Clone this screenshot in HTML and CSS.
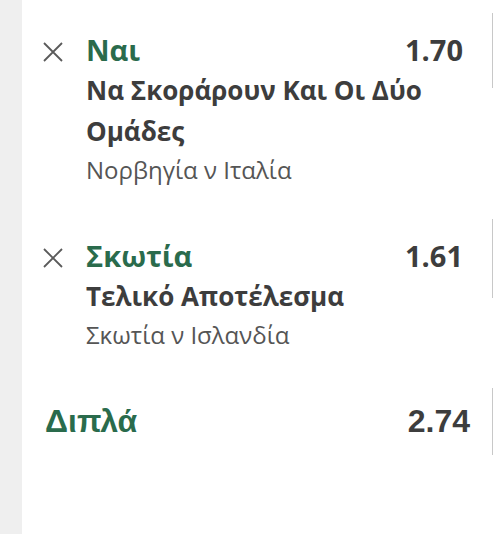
FILE: index.html
```html
<!DOCTYPE html>
<html lang="el">
<head>
<meta charset="utf-8">
<link rel="stylesheet" href="styles.css">
</head>
<body>
<div class="page">
  <div class="strip"></div>
  <div class="slip">
    <div class="bet bet-first">
      <div class="bet-body">
        <svg class="remove" viewBox="0 0 20 20" width="20" height="20"><path d="M1 1L19 19M19 1L1 19" stroke="#5a5a5a" stroke-width="1.8" fill="none"/></svg>
        <div class="bet-text">
          <div class="bet-head"><span class="pick">Ναι</span><span class="odds">1.70</span></div>
          <div class="market">Να Σκοράρουν Και Οι Δύο Ομάδες</div>
          <div class="event">Νορβηγία ν Ιταλία</div>
        </div>
      </div>
      <div class="edge"></div>
    </div>
    <div class="bet bet-second">
      <div class="bet-body">
        <svg class="remove" viewBox="0 0 20 20" width="20" height="20"><path d="M1 1L19 19M19 1L1 19" stroke="#5a5a5a" stroke-width="1.8" fill="none"/></svg>
        <div class="bet-text">
          <div class="bet-head"><span class="pick">Σκωτία</span><span class="odds">1.61</span></div>
          <div class="market">Τελικό Αποτέλεσμα</div>
          <div class="event">Σκωτία ν Ισλανδία</div>
        </div>
      </div>
      <div class="edge edge-second"></div>
    </div>
    <div class="bet total">
      <div class="total-row"><span class="total-label">Διπλά</span><span class="total-odds">2.74</span></div>
      <div class="edge edge-total"></div>
    </div>
  </div>
</div>
</body>
</html>
```
FILE: styles.css
```css
html, body {
  margin: 0;
  padding: 0;
  background: #ffffff;
}
.page {
  display: flex;
  width: 493px;
  height: 534px;
  overflow: hidden;
  font-family: "Open Sans", "Noto Sans", sans-serif;
}
.strip {
  width: 22px;
  flex: none;
  background: #efefef;
}
.slip {
  flex: 1;
  display: flex;
  flex-direction: column;
}
.bet {
  display: flex;
  align-items: flex-start;
}
.bet-first {
  padding-top: 13px;
}
.bet-second {
  padding-top: 31px;
}
.bet-body {
  flex: 1;
  display: flex;
  align-items: flex-start;
  padding-top: 17px;
}
.remove {
  flex: none;
  margin: 12px 23px 0 21px;
}
.bet-text {
  flex: 1;
  margin-right: 29px;
}
.bet-head {
  display: flex;
  justify-content: space-between;
  align-items: baseline;
  line-height: 40px;
}
.pick {
  font-size: 29px;
  font-weight: 700;
  color: #2a6b4c;
}
.odds {
  font-size: 29px;
  font-weight: 700;
  color: #3d3d3d;
}
.market {
  font-size: 26px;
  font-weight: 700;
  line-height: 41px;
  color: #3d3d3d;
}
.event {
  font-size: 24px;
  line-height: 36px;
  color: #555555;
}
.edge {
  width: 1px;
  height: 75px;
  background: #c8c8c8;
  flex: none;
}
.edge-second {
  height: 79px;
}
.total {
  padding-top: 31px;
}
.total-row {
  flex: 1;
  display: flex;
  justify-content: space-between;
  align-items: baseline;
  padding: 17px 22px 0 23px;
  font-family: "Liberation Sans", Arial, sans-serif;
  font-weight: 700;
  font-size: 32px;
  line-height: 40px;
}
.total-label {
  color: #2a6b4c;
}
.total-odds {
  color: #3d3d3d;
}
.edge-total {
  height: 67px;
  margin-top: 4px;
}
```
